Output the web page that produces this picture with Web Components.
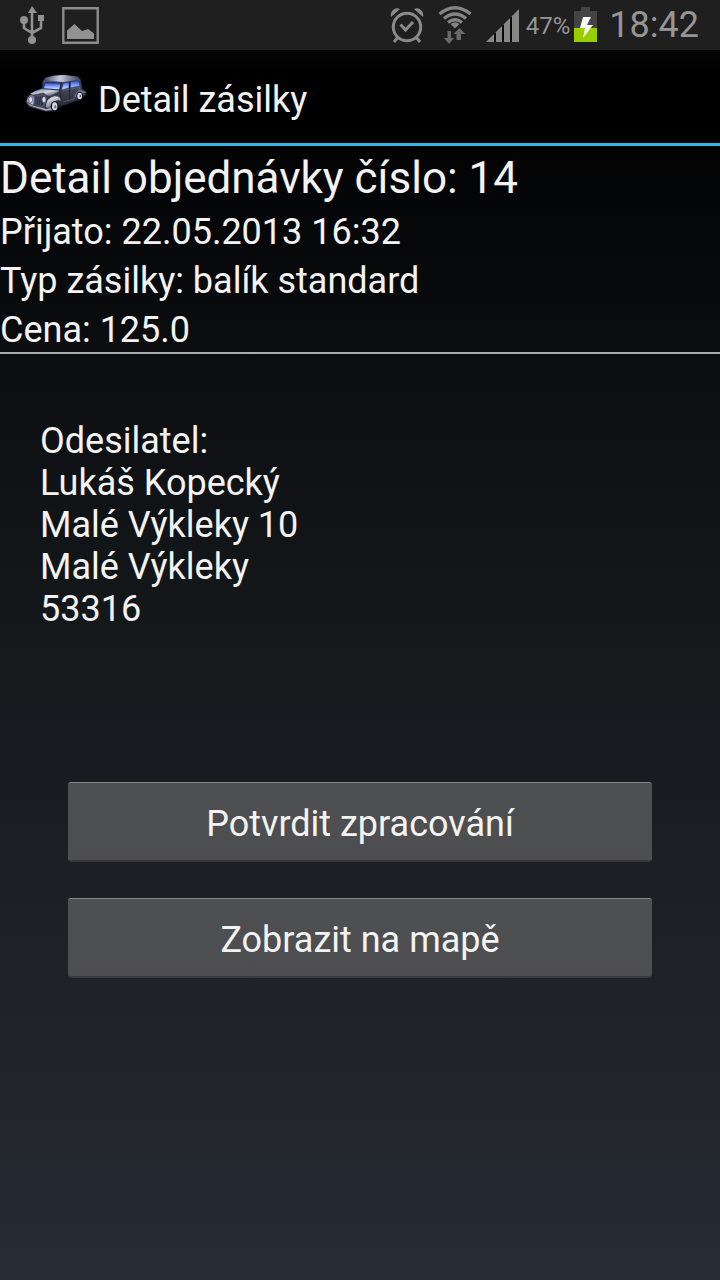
<!DOCTYPE html>
<html lang="cs">
<head>
<meta charset="utf-8">
<meta name="viewport" content="width=device-width, initial-scale=1">
<title>Detail zásilky</title>
<style>
html { height: 100%; background: #000; }
body { margin: 0; min-height: 100%; display: flex; flex-direction: column; font-family: Roboto, "Noto Sans", sans-serif; color: #f3f3f3; }
</style>
</head>
<body>
<phone-screen>
  <status-bar slot="status" battery="47%" time="18:42"></status-bar>
  <action-bar slot="header">Detail zásilky</action-bar>
  <order-summary>
    <span slot="title">Detail objednávky číslo: 14</span>
    <span slot="received">Přijato: 22.05.2013 16:32</span>
    <span slot="type">Typ zásilky: balík standard</span>
    <span slot="price">Cena: 125.0</span>
  </order-summary>
  <sender-address>
    <div>Odesilatel:</div>
    <div>Lukáš Kopecký</div>
    <div>Malé Výkleky 10</div>
    <div>Malé Výkleky</div>
    <div>53316</div>
  </sender-address>
  <button-list>
    <holo-button>Potvrdit zpracování</holo-button>
    <holo-button>Zobrazit na mapě</holo-button>
  </button-list>
</phone-screen>

<script>
function define(name, html, setup) {
  const template = document.createElement('template');
  template.innerHTML = html;
  customElements.define(name, class extends HTMLElement {
    constructor() {
      super();
      this.attachShadow({ mode: 'open' }).append(template.content.cloneNode(true));
    }
    connectedCallback() { if (setup) setup(this); }
  });
}

define('phone-screen', `
<style>
:host { display: flex; flex-direction: column; flex: 1; background: linear-gradient(#000 0%, #020203 11%, #0d0f11 30%, #15191c 50%, #1b1e23 66%, #212529 83%, #272b35 100%); }
main { display: flex; flex-direction: column; }
</style>
<slot name="status"></slot>
<slot name="header"></slot>
<main><slot></slot></main>`);

define('status-bar', `
<style>
:host { display: flex; align-items: center; justify-content: space-between; height: 50px; padding: 0 21px 0 20px; background: #1f1f1f; color: #969696; }
div { display: flex; align-items: center; }
.left { gap: 16px; }
.wifi, .signal { margin-left: 14px; }
.pct { font-size: 24px; line-height: 28px; margin: 2px 4px 0 6px; }
.time { font-size: 36px; line-height: 42px; margin-left: 12px; }
svg { display: block; }
</style>
<div class="left">
  <svg width="26" height="38" viewBox="0 0 26 38" fill="#929292" aria-label="USB">
    <path d="M12 0 17 7H8z"/><circle cx="12" cy="34" r="4"/><circle cx="4" cy="14" r="4"/><path d="M18 9h6v6h-6z"/>
    <path d="M12 6v27M4 15v7l8 5M21 14v8l-9 5" fill="none" stroke="#929292" stroke-width="2.6"/>
  </svg>
  <svg width="38" height="37" viewBox="0 0 38 37" aria-label="Obrázek">
    <path d="M1.3 1.3h34.4v34.4H1.3z" fill="none" stroke="#8c8c8c" stroke-width="2.4"/>
    <path d="M5 32v-8.500l7.500-6.500 7.500 7 6-2 6 4.500V32z" fill="#929292"/>
  </svg>
</div>
<div>
  <svg width="34" height="36" viewBox="0 0 34 36" aria-label="Budík">
    <g fill="none" stroke="#8a8a8a" stroke-width="3"><circle cx="17" cy="20" r="13.700"/><path d="m10.500 17.500 5 5.500 7.500-8M8 30l-4 5M26 30l4 5"/></g>
    <path d="M1 10Q0 6 3 3Q6 0 10 2zM33 10Q34 6 31 3Q28 0 24 2z" fill="#8a8a8a"/>
  </svg>
  <svg class="wifi" width="34" height="38" viewBox="0 0 34 38" aria-label="Wi-Fi">
    <g fill="none" stroke="#858585" stroke-width="3.200"><path d="M1.500 8Q17-4.500 32.500 8"/><path d="M6 12.500Q17 3.500 28 12.500"/><path d="M10 16.500Q17 11 24 16.500"/></g>
    <path d="m17 22.500-4.500-4.500q4.500-3.500 9 0z" fill="#858585"/>
    <path d="M9.500 25h3.500v7h3l-5 6-5-6h3.500zM18.500 34v-6H15.500l6-6 6 6H23v6z" fill="#696969"/>
  </svg>
  <svg class="signal" width="34" height="34" viewBox="0 0 34 34" aria-label="Signál">
    <path d="M0 34 33 1v33z" fill="#868686"/>
    <path d="M9 25v9M17 17v17M25 9v25" stroke="#090909" stroke-width="2"/>
  </svg>
  <span class="pct"></span>
  <svg width="23" height="36" viewBox="0 0 23 36" aria-label="Nabíjení">
    <path d="M7 0h9v4h7v17H0V4h7z" fill="#444"/><path d="M0 21h23v14H0z" fill="#98cf00"/>
    <path d="M9 10h8l-4 8h6L9 31l2-10H6z" fill="#fff"/>
  </svg>
  <time class="time"></time>
</div>`, el => {
  el.shadowRoot.querySelector('.pct').textContent = el.getAttribute('battery');
  el.shadowRoot.querySelector('.time').textContent = el.getAttribute('time');
});

define('action-bar', `
<style>
:host { display: block; }
header { display: flex; align-items: center; gap: 8px; height: 93px; padding: 0 24px; border-bottom: 3px solid #33b5e5; background: linear-gradient(#050506, #000 30%); }
h1 { margin: 0; padding-top: 6px; font-size: 36px; line-height: 42px; font-weight: 400; }
</style>
<header>
  <vehicle-icon></vehicle-icon>
  <h1><slot></slot></h1>
</header>`);

define('vehicle-icon', `
<style>:host { display: block; flex: none; padding-bottom: 8px; } svg { display: block; }</style>
<svg width="66" height="42" viewBox="42 36 198 126" aria-label="Auto">
  <defs>
    <linearGradient id="roof" x1="0" y1="0" x2="1" y2="0"><stop offset="0" stop-color="#414b70"/><stop offset=".45" stop-color="#c5c9dc"/><stop offset="1" stop-color="#3c4158"/></linearGradient>
    <linearGradient id="glass" x1="0" y1="0" x2="0" y2="1"><stop offset="0" stop-color="#3148c8"/><stop offset=".55" stop-color="#88a9fa"/><stop offset="1" stop-color="#dbe4ff"/></linearGradient>
    <linearGradient id="body" x1="0" y1="0" x2="0" y2="1"><stop offset="0" stop-color="#565b70"/><stop offset="1" stop-color="#20222e"/></linearGradient>
    <linearGradient id="hood" x1="0" y1="0" x2="1" y2="1"><stop offset="0" stop-color="#686f89"/><stop offset=".5" stop-color="#d2d4e0"/><stop offset="1" stop-color="#282b3d"/></linearGradient>
  </defs>
  <path d="M98 65 106 53Q134 44 163 45L203 50 211 58 217 88 229 96 226 104 214 119 198 122 149 140 132 154 105 153 55 139 48 126 56 106 72 94 97 85z" fill="url(#body)" stroke="#20253e" stroke-width="2"/>
  <path d="m102 61 7-8q28-9 54-8l41 6 5 8-52 7z" fill="url(#roof)"/>
  <path d="m105 68 49 1-4 21-50-4z" fill="url(#glass)" stroke="#1c286b" stroke-width="3"/>
  <path d="m160 70 17-4v18l-23 6zM181 65l26-3 3 16-29 6z" fill="url(#glass)" stroke="#222d68" stroke-width="2"/>
  <path d="M96 87 149 92 121 108 99 104 74 106 61 101 77 93z" fill="url(#hood)"/>
  <path d="m71 105 30-6 13 14-10 32-39-11z" fill="#4a5068" stroke="#202231" stroke-width="2"/>
  <path d="M77 109h25l-5 28-22-5z" fill="#252a40"/>
  <path d="m82 108-4 24m10-24-4 26m11-26-4 28" stroke="#9299b2" stroke-width="1"/>
  <path d="M50 126q0-17 14-21 10 1 8 17l-3 13zM107 141q3-28 26-32 19-1 22 15l-11-4q-18 3-23 28z" fill="url(#hood)"/>
  <path d="m49 125 17 10 44 11 17-4v9l-20 2-48-15z" fill="#a9acbd" stroke="#424659" stroke-width="2"/>
  <ellipse cx="62" cy="119" rx="6" ry="9" fill="#dfe1ed" stroke="#3d4562" stroke-width="2"/>
  <ellipse cx="102" cy="119" rx="6" ry="9" fill="#d7dae8" stroke="#3d4562" stroke-width="2"/>
  <ellipse cx="134" cy="139" rx="12" ry="16" fill="#141620"/><ellipse cx="134" cy="139" rx="8" ry="12" fill="#d5d6df"/><ellipse cx="136" cy="140" rx="3" ry="5" fill="#60637a"/>
  <path d="m158 91 51-9-4 12-12 23-34 9" fill="none" stroke="#676d88" stroke-width="2"/>
  <path d="m154 66-5 26 5 33M179 65v53" fill="none" stroke="#1d2030" stroke-width="3"/>
  <path d="M193 110q4-18 18-20l18 7-13 4-12 13z" fill="#6f748e"/>
  <ellipse cx="209" cy="108" rx="10" ry="13" fill="#151722"/><ellipse cx="209" cy="108" rx="7" ry="10" fill="#dedfea"/><ellipse cx="211" cy="108" rx="3" ry="4" fill="#55586e"/>
</svg>`);

define('order-summary', `
<style>
:host { display: flex; flex-direction: column; gap: 7px; padding: 6px 0 1px; border-bottom: 2px solid #acacac; font-size: 36px; line-height: 42px; }
h2, p { margin: 0; font-weight: 400; }
h2 { font-size: 44px; line-height: 52px; }
</style>
<h2><slot name="title"></slot></h2>
<p><slot name="received"></slot></p>
<p><slot name="type"></slot></p>
<p><slot name="price"></slot></p>`);

define('sender-address', `
<style>
:host { display: block; padding: 66px 40px 0; }
address { font-style: normal; font-size: 36px; line-height: 42px; }
</style>
<address><slot></slot></address>`);

define('button-list', `
<style>:host { display: flex; flex-direction: column; gap: 36px; padding: 152px 68px 64px; }</style>
<slot></slot>`);

define('holo-button', `
<style>
:host { display: block; }
button { display: block; box-sizing: border-box; width: 100%; height: 80px; margin: 0; padding: 4px 16px 0; border: 0; border-top: 1px solid #858688; border-bottom: 2px solid #37393c; border-radius: 3px; background: linear-gradient(#4d4f51, #4e4e50); color: #f3f3f3; font: 36px/42px Roboto, "Noto Sans", sans-serif; text-align: center; }
</style>
<button type="button"><slot></slot></button>`);
</script>
</body>
</html>
